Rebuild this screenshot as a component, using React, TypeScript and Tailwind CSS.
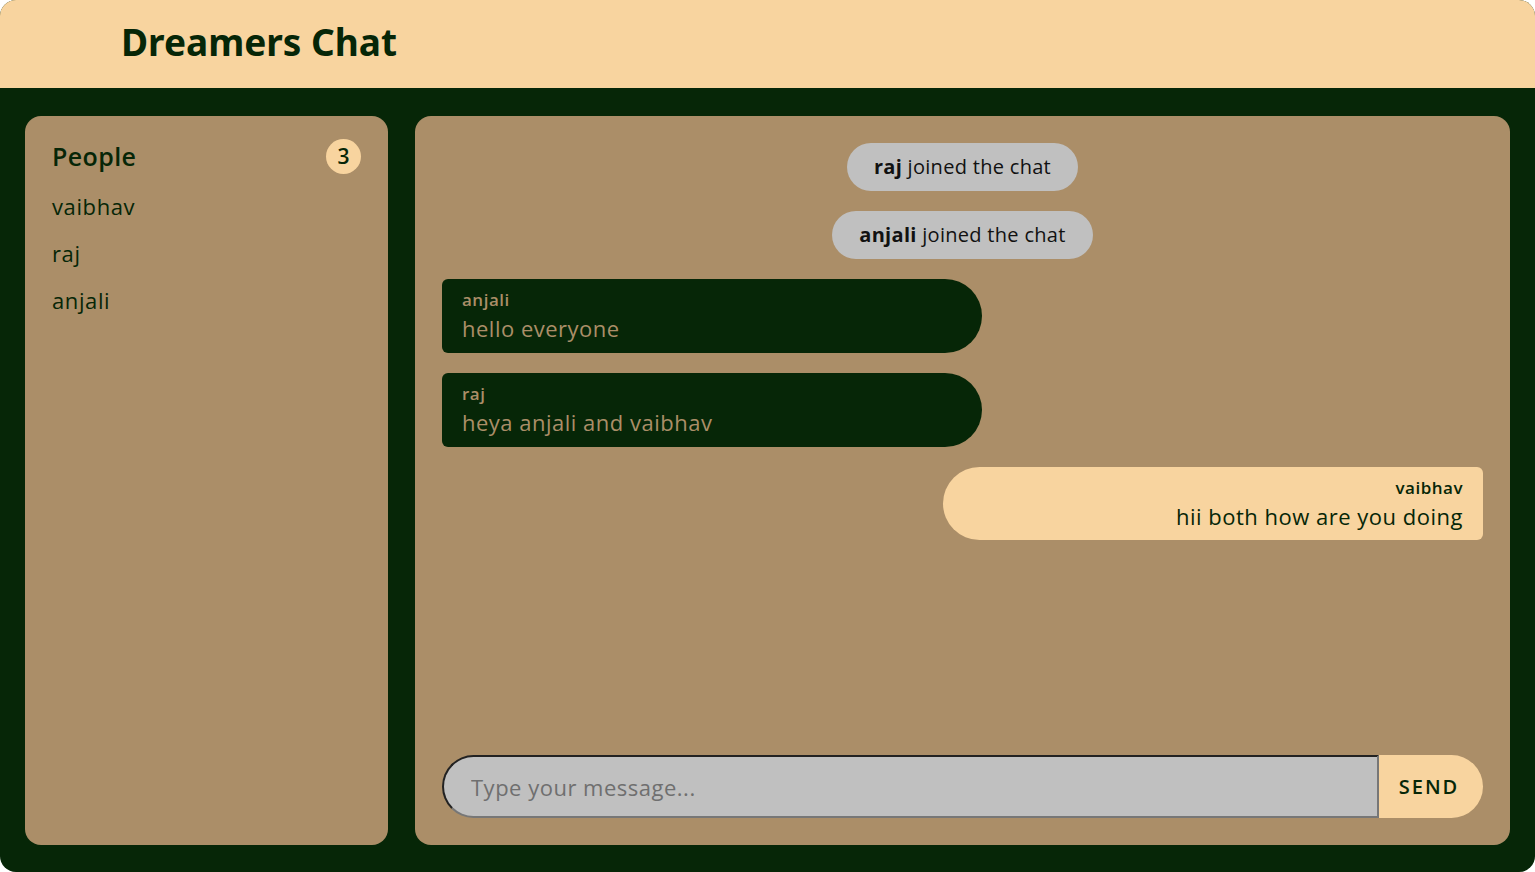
import React from "react";

type Msg =
  | { kind: "system"; name: string }
  | { kind: "chat"; name: string; text: string; mine?: boolean };

const people = ["vaibhav", "raj", "anjali"];

const messages: Msg[] = [
  { kind: "system", name: "raj" },
  { kind: "system", name: "anjali" },
  { kind: "chat", name: "anjali", text: "hello everyone" },
  { kind: "chat", name: "raj", text: "heya anjali and vaibhav" },
  { kind: "chat", name: "vaibhav", text: "hii both how are you doing", mine: true },
];

const body = { fontFamily: "'Open Sans', 'Noto Sans', sans-serif" };

export default function App() {
  return (
    <div className="h-screen w-full bg-white">
      <div className="flex h-full w-full flex-col overflow-hidden rounded-2xl bg-[#062607]" style={body}>
        <header className="flex h-[88px] shrink-0 items-center bg-[#f8d49f] pb-[4px] pl-[121px]">
          <h1
            className="text-[37px] font-bold text-[#062607]"
            style={{ fontFamily: "'Noto Sans', 'Open Sans', sans-serif" }}
          >
            Dreamers Chat
          </h1>
        </header>

        <main className="flex min-h-0 flex-1 gap-[27px] px-[25px] pb-[27px] pt-[28px]">
          <aside className="w-[363px] shrink-0 rounded-2xl bg-[#ab8e68] px-[27px] pt-[22px]">
            <div className="flex items-center justify-between">
              <h2 className="text-[25px] font-semibold tracking-[0.4px] text-[#062607]">People</h2>
              <span className="flex h-[35px] w-[35px] items-center justify-center rounded-full bg-[#f8d49f] text-[21px] font-semibold text-[#062607]">
                {people.length}
              </span>
            </div>
            <ul className="mt-[15px] flex flex-col gap-[17px]">
              {people.map((p) => (
                <li key={p} className="text-[22px] leading-[30px] tracking-[0.6px] text-[#062607]">
                  {p}
                </li>
              ))}
            </ul>
          </aside>

          <section className="flex min-w-0 flex-1 flex-col rounded-2xl bg-[#ab8e68] px-[27px] pb-[27px] pt-[27px]">
            <div className="flex flex-1 flex-col gap-[20px]">
              {messages.map((m, i) =>
                m.kind === "system" ? (
                  <div key={i} className="flex justify-center">
                    <div className="flex h-[48px] items-center rounded-full bg-[#c0c0c0] px-[27px] text-[20px] tracking-[0.3px] text-[#111]">
                      <span className="font-bold">{m.name}</span>&nbsp;joined the chat
                    </div>
                  </div>
                ) : (
                  <div key={i} className={m.mine ? "flex justify-end" : "flex justify-start"}>
                    <div
                      className={
                        m.mine
                          ? "flex h-[73px] w-[540px] flex-col items-end justify-center rounded-l-[37px] rounded-r-md bg-[#f8d49f] pr-[20px] text-[#062607]"
                          : "flex h-[74px] w-[540px] flex-col justify-center rounded-l-md rounded-r-[37px] bg-[#062607] pl-[20px] text-[#ab8e68]"
                      }
                    >
                      <span className="text-[17px] font-semibold leading-[22px] tracking-[0.5px]">{m.name}</span>
                      <span className="mt-[2px] text-[22px] leading-[30px] tracking-[0.5px]">{m.text}</span>
                    </div>
                  </div>
                )
              )}
            </div>

            <form className="flex h-[63px]" onSubmit={(e) => e.preventDefault()}>
              <input
                type="text"
                placeholder="Type your message..."
                className="h-full min-w-0 flex-1 rounded-l-full border-2 border-t-[#222] border-l-[#222] border-b-[#777] border-r-[#777] bg-[#c0c0c0] pl-[27px] text-[22px] tracking-[0.5px] text-[#222] outline-none placeholder:text-[#6f6f6f]"
              />
              <button
                type="submit"
                className="h-full w-[104px] rounded-r-full bg-[#f8d49f] pr-[4px] text-[20px] font-semibold tracking-[2px] text-[#062607]"
              >
                SEND
              </button>
            </form>
          </section>
        </main>
      </div>
    </div>
  );
}
